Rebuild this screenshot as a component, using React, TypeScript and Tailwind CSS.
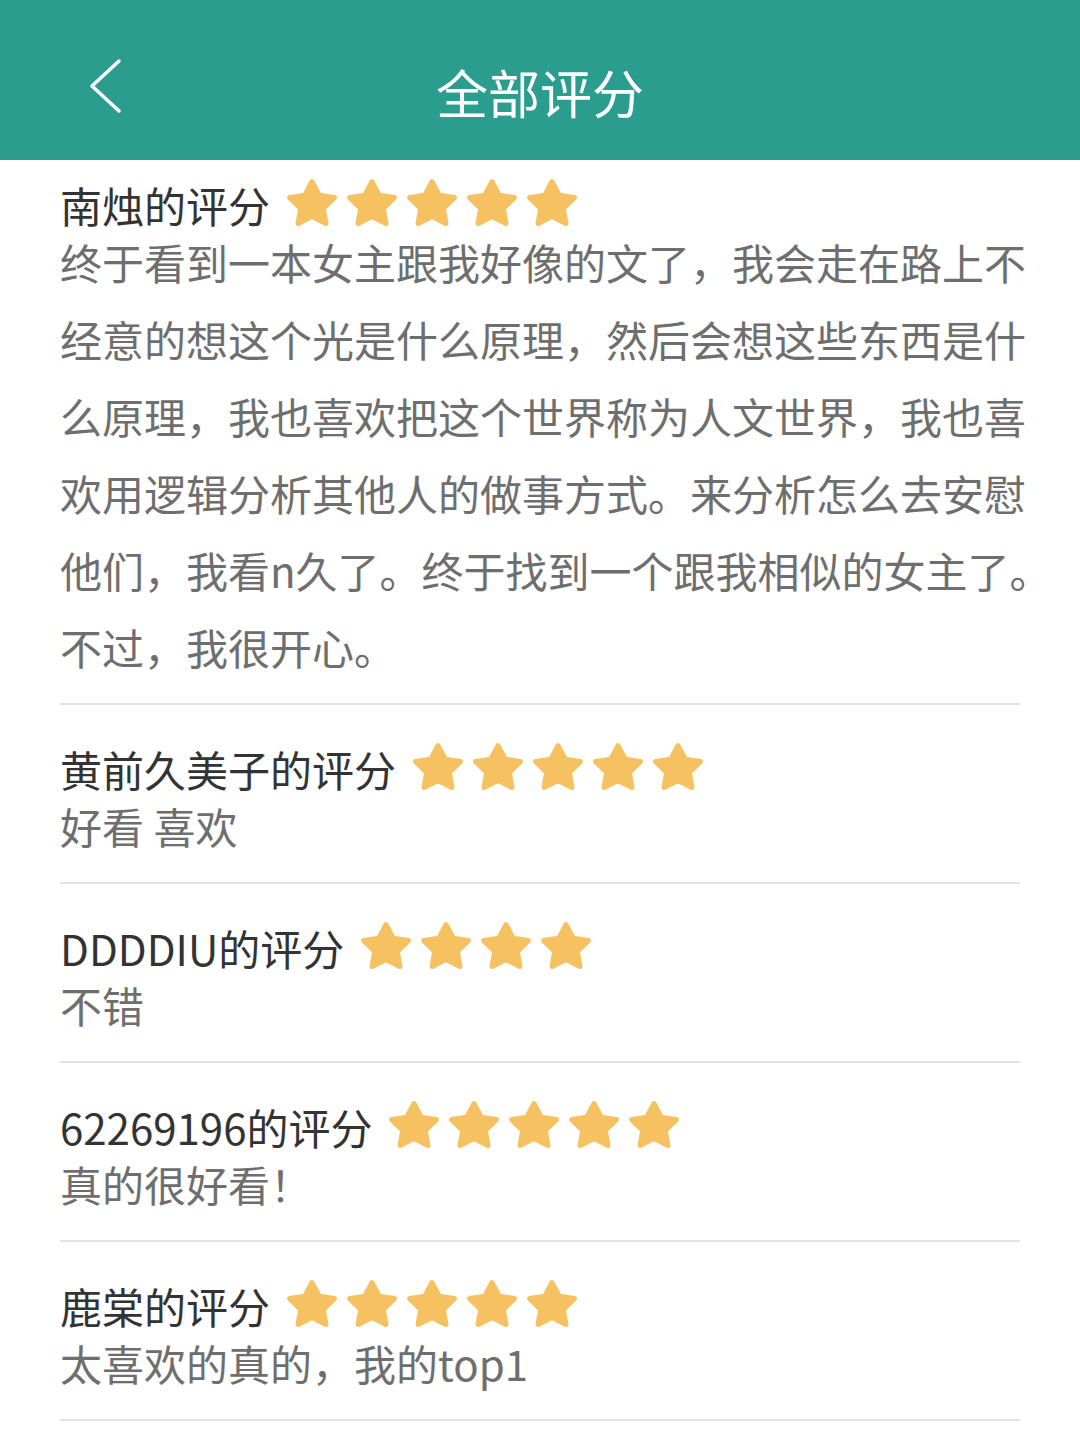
import React from "react";

const Star = () => (
  <svg width="52" height="52" viewBox="0 0 24 24" className="shrink-0">
    <path
      d="M12 2.2L15.3 8.4 22.3 9.5 17.2 14.5 18.4 21.4 12 18.2 5.6 21.4 6.8 14.5 1.7 9.5 8.7 8.4z"
      fill="#F6C261"
      stroke="#F6C261"
      strokeWidth="2.4"
      strokeLinejoin="round"
    />
  </svg>
);

type Item = { name: string; stars: number; lines: string[] };

const items: Item[] = [
  {
    name: "南烛的评分",
    stars: 5,
    lines: [
      "终于看到一本女主跟我好像的文了，我会走在路上不",
      "经意的想这个光是什么原理，然后会想这些东西是什",
      "么原理，我也喜欢把这个世界称为人文世界，我也喜",
      "欢用逻辑分析其他人的做事方式。来分析怎么去安慰",
      "他们，我看n久了。终于找到一个跟我相似的女主了。",
      "不过，我很开心。",
    ],
  },
  { name: "黄前久美子的评分", stars: 5, lines: ["好看 喜欢"] },
  { name: "DDDDIU的评分", stars: 4, lines: ["不错"] },
  { name: "62269196的评分", stars: 5, lines: ["真的很好看！"] },
  { name: "鹿棠的评分", stars: 5, lines: ["太喜欢的真的，我的top1"] },
];

export default function App() {
  return (
    <div
      className="w-[1080px] h-[1440px] bg-white overflow-hidden"
      style={{ fontFamily: '"Noto Sans CJK SC", "Noto Sans", sans-serif' }}
    >
      <div className="relative h-[160px] bg-[#2A9D8F] flex items-center justify-center pt-[24px]">
        <svg
          className="absolute left-[88px] top-[56px]"
          width="40"
          height="60"
          viewBox="0 0 40 60"
        >
          <polyline
            points="31,5 4,30 31,55"
            fill="none"
            stroke="white"
            strokeWidth="3.5"
            strokeLinecap="round"
            strokeLinejoin="round"
          />
        </svg>
        <div className="text-white text-[52px] leading-[60px]">全部评分</div>
      </div>
      <div className="pl-[60px] pr-[60px]">
        {items.map((it, i) => (
          <div
            key={i}
            className={`${i === 0 ? "pt-[26px]" : "pt-[45px]"} border-b-2 border-[#E3E3E3]`}
          >
            <div className="flex items-center h-[37px] text-[42px] text-[#333333] whitespace-nowrap">
              <span className="leading-[37px]">{it.name}</span>
              <div className="flex items-center gap-[8px] ml-[16px] -mt-[3px]">
                {Array.from({ length: it.stars }).map((_, k) => (
                  <Star key={k} />
                ))}
              </div>
            </div>
            <div className="pb-[18px] text-[42px] leading-[77px] text-[#6E6E6E]">
              {it.lines.map((l, k) => (
                <div key={k} className="whitespace-nowrap">
                  {l}
                </div>
              ))}
            </div>
          </div>
        ))}
      </div>
    </div>
  );
}
